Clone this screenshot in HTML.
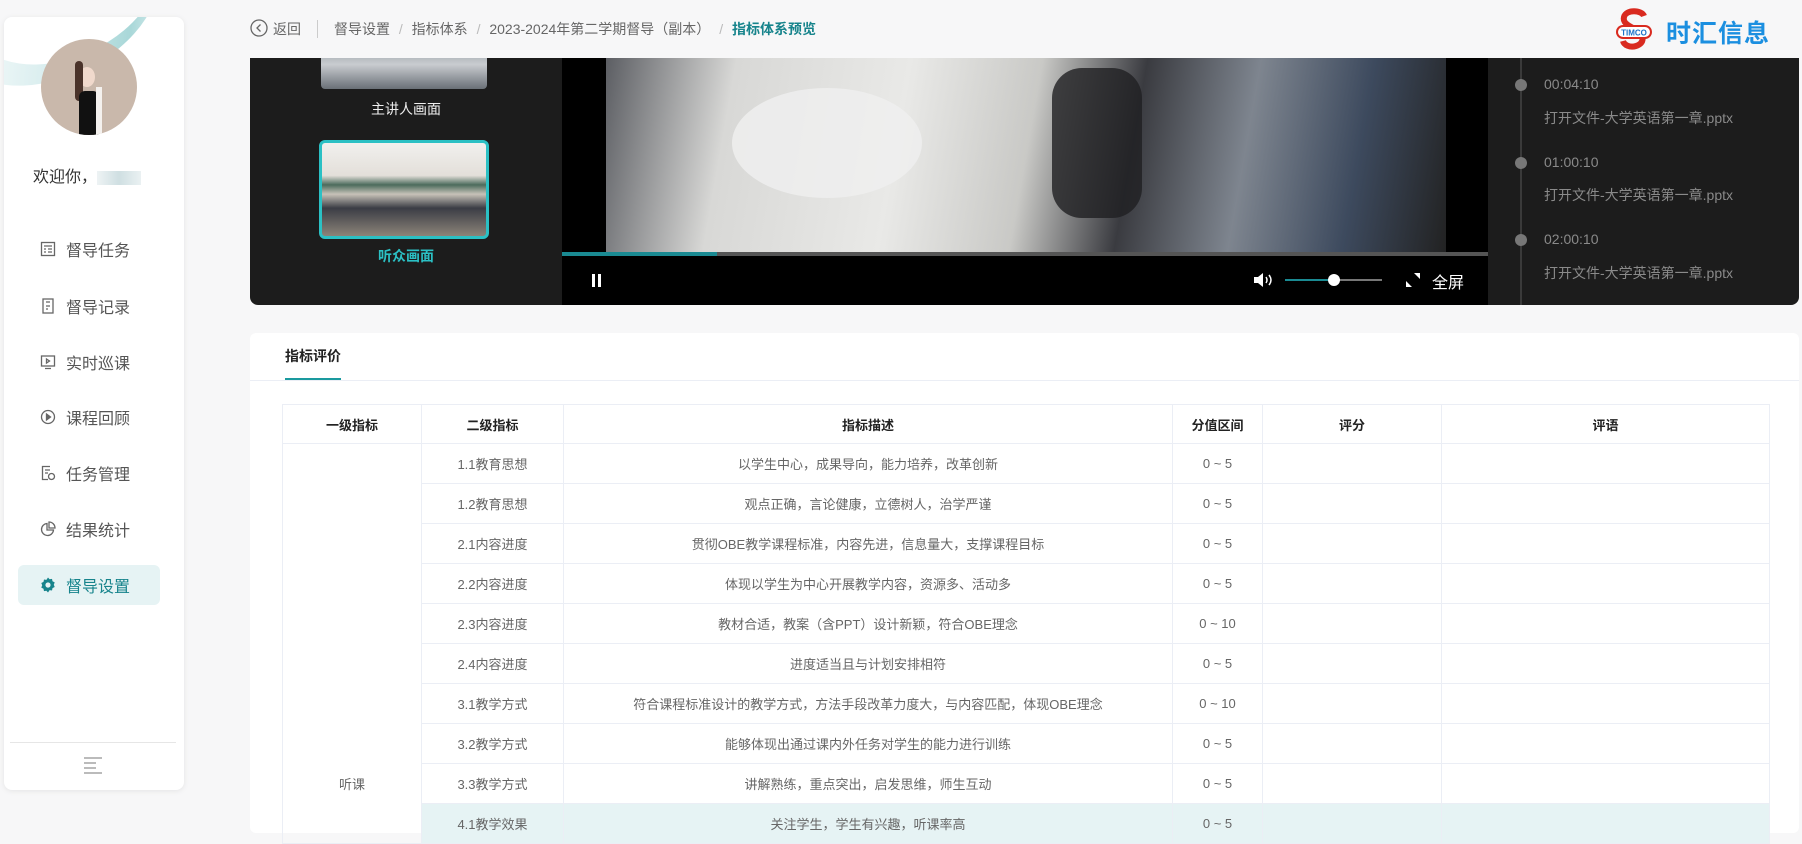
<!DOCTYPE html>
<html><head><meta charset="utf-8"><style>
*{margin:0;padding:0;box-sizing:border-box}
body{width:1802px;height:825px;overflow:hidden;background:#f7f7f8;font-family:"Liberation Sans","Noto Sans CJK SC",sans-serif;position:relative;color:#333}
.abs{position:absolute}
.side{left:4px;top:17px;width:180px;height:773px;background:#fff;border-radius:8px;box-shadow:0 1px 6px rgba(0,0,0,.08);overflow:hidden}
.menu{left:18px;width:142px;height:40px;font-size:16px;color:#555;display:flex;align-items:center;padding-left:22px}
.menu svg{margin-right:10px}
.bc{top:20px;font-size:14px;color:#666;line-height:18px}
.dark{left:250px;top:58px;width:1549px;height:247px;background:#1c1c1c;border-radius:0 0 8px 8px;overflow:hidden}
.tl{font-size:14px;color:#8a8a8a}
.card{left:250px;top:333px;width:1549px;height:500px;background:#fff;border-radius:6px}
table{position:absolute;left:282px;top:404px;border-collapse:collapse;font-size:13px;color:#666}
td,th{border:1px solid #ebeef5;text-align:center;height:40px;padding:0}
th{color:#222;font-weight:bold;height:39px;font-size:13px}
</style></head><body>
<div class="abs side">
 <div class="abs" style="left:-60px;top:-80px;width:220px;height:140px;border-radius:50%;background:linear-gradient(120deg,#ffffff 10%,#cfe9ea 55%,#9fd3d4 80%,#ffffff);transform:rotate(-25deg);opacity:.9"></div>
 <div class="abs" style="left:-40px;top:-90px;width:200px;height:130px;border-radius:50%;background:#fff;transform:rotate(-25deg)"></div>
 <div class="abs" style="left:37px;top:22px;width:96px;height:96px;border-radius:50%;background:#c9b8ab;overflow:hidden">
  <div class="abs" style="left:38px;top:28px;width:16px;height:20px;border-radius:50%;background:#f0d9cc"></div>
  <div class="abs" style="left:34px;top:22px;width:8px;height:40px;background:#4a332a;border-radius:5px"></div>
  <div class="abs" style="left:38px;top:52px;width:20px;height:60px;background:#111;border-radius:6px 6px 0 0"></div>
  <div class="abs" style="left:55px;top:48px;width:6px;height:50px;background:#f4f1ee"></div>
 </div>
 <div class="abs" style="left:29px;top:146px;font-size:16px;color:#333">欢迎你，<span style="display:inline-block;width:44px;height:14px;background:linear-gradient(90deg,#eef3f4,#cfdfe2,#eaf1f2);vertical-align:middle"></span></div>
 <div class="abs" style="left:6px;top:725px;width:166px;height:1px;background:#e6e6e6"></div>
 <div class="abs" style="left:80px;top:740px;width:18px;height:16px">
  <div style="height:2px;background:#bbb;margin-bottom:3px"></div><div style="height:2px;width:12px;background:#bbb;margin-bottom:3px"></div><div style="height:2px;width:12px;background:#bbb;margin-bottom:3px"></div><div style="height:2px;background:#bbb"></div>
 </div>
</div>
<div class="abs menu" style="top:229px"><svg width="16" height="16" viewBox="0 0 16 16" fill="none" stroke="#666" stroke-width="1.3"><rect x="1.5" y="1.5" width="13" height="13"/><path d="M4 5h8M4 8h2M8 8h4M4 11h2M8 11h4"/></svg>督导任务</div>
<div class="abs menu" style="top:286px"><svg width="16" height="16" viewBox="0 0 16 16" fill="none" stroke="#666" stroke-width="1.3"><rect x="3" y="1" width="10" height="14"/><path d="M6 4h4M6 8h4M6 11h2"/></svg>督导记录</div>
<div class="abs menu" style="top:342px"><svg width="16" height="16" viewBox="0 0 16 16" fill="none" stroke="#666" stroke-width="1.3"><rect x="1.5" y="2" width="13" height="10"/><path d="M6.5 5l3 2-3 2zM5 14.5h6"/></svg>实时巡课</div>
<div class="abs menu" style="top:397px"><svg width="16" height="16" viewBox="0 0 16 16" fill="none" stroke="#666" stroke-width="1.3"><circle cx="8" cy="8" r="6.5"/><path d="M6.5 5l4 3-4 3z" fill="#666"/></svg>课程回顾</div>
<div class="abs menu" style="top:453px"><svg width="16" height="16" viewBox="0 0 16 16" fill="none" stroke="#666" stroke-width="1.3"><path d="M10 1.5H2.5v13H8M5 5h5M5 8h3"/><circle cx="11.5" cy="11.5" r="3"/></svg>任务管理</div>
<div class="abs menu" style="top:509px"><svg width="16" height="16" viewBox="0 0 16 16" fill="none" stroke="#666" stroke-width="1.3"><path d="M7 2.5a6 6 0 1 0 6.5 6.5H7z"/><path d="M9 1v6h6a6 6 0 0 0-6-6z"/></svg>结果统计</div>
<div class="abs menu" style="top:565px;background:#e6f3f4;border-radius:6px;color:#17848c"><svg width="16" height="16" viewBox="0 0 16 16"><path d="M8 0.5l1.6 1.8 2.4-.4.5 2.4 2.2 1.1-.9 2.3.9 2.3-2.2 1.1-.5 2.4-2.4-.4L8 15.5l-1.6-1.8-2.4.4-.5-2.4-2.2-1.1.9-2.3-.9-2.3 2.2-1.1.5-2.4 2.4.4z" fill="#17848c"/><circle cx="8" cy="8" r="2.6" fill="#e6f3f4"/></svg>督导设置</div>

<svg class="abs" style="left:250px;top:19px" width="18" height="18" viewBox="0 0 18 18" fill="none" stroke="#666" stroke-width="1.3"><circle cx="9" cy="9" r="8"/><path d="M10.5 5.5L7 9l3.5 3.5"/></svg>
<div class="abs bc" style="left:273px">返回</div>
<div class="abs" style="left:317px;top:20px;width:1px;height:18px;background:#ccc"></div>
<div class="abs bc" style="left:334px">督导设置 <span style="color:#bbb;margin:0 5px">/</span> 指标体系 <span style="color:#bbb;margin:0 5px">/</span> 2023-2024年第二学期督导（副本） <span style="color:#bbb;margin:0 5px">/</span> <b style="color:#17848c">指标体系预览</b></div>

<svg class="abs" style="left:1614px;top:8px" width="40" height="46" viewBox="0 0 40 46"><path d="M30 8C28 2 12 1 10 9c-2 7 8 10 14 14s7 12-2 15c-6 2-12-1-13-5" fill="none" stroke="#d92a1f" stroke-width="6"/><rect x="2" y="17" width="36" height="14" rx="7" fill="#d92a1f"/><rect x="4" y="19" width="32" height="10" rx="5" fill="#fff"/><text x="20" y="27.5" font-size="8" font-weight="bold" fill="#1a73c9" text-anchor="middle" font-family="Liberation Sans,sans-serif">TIMCO</text></svg>
<div class="abs" style="left:1666px;top:14px;font-size:25px;font-weight:bold;color:#1b8fe0;letter-spacing:1px">时汇信息</div>

<div class="abs dark">
 <div class="abs" style="left:71px;top:-10px;width:166px;height:41px;border-radius:4px;background:linear-gradient(180deg,#9aa3a8,#c9ccd0 40%,#6a7077);"></div>
 <div class="abs" style="left:0;top:41px;width:312px;text-align:center;font-size:14px;color:#eee">主讲人画面</div>
 <div class="abs" style="left:69px;top:82px;width:170px;height:99px;border:3px solid #2bc0c4;border-radius:6px;background:linear-gradient(180deg,#f1f0ee 0%,#e3dfd9 35%,#4b6b5c 45%,#c7c2b8 55%,#3b3d45 70%,#8c8479 100%)"></div>
 <div class="abs" style="left:0;top:188px;width:312px;text-align:center;font-size:14px;font-weight:bold;color:#2bc0c4">听众画面</div>
 <div class="abs" style="left:312px;top:0;width:926px;height:247px;background:#000">
  <div class="abs" style="left:44px;top:0;width:840px;height:194px;background:linear-gradient(100deg,#5c5e63 0%,#d8d8d6 15%,#e9e9e7 35%,#c9c9c6 50%,#3a3b40 62%,#7e858f 75%,#3d4a5e 88%,#222 100%)"></div>
  <div class="abs" style="left:170px;top:30px;width:190px;height:110px;border-radius:50%;background:#efefef;opacity:.85"></div>
  <div class="abs" style="left:490px;top:10px;width:90px;height:150px;background:#1f1f22;border-radius:30px;opacity:.8"></div>
  <div class="abs" style="left:0;top:194px;width:926px;height:4px;background:#555"></div>
  <div class="abs" style="left:0;top:194px;width:155px;height:4px;background:#1a8a92"></div>
  <div class="abs" style="left:30px;top:216px;width:3px;height:13px;background:#fff"></div>
  <div class="abs" style="left:36px;top:216px;width:3px;height:13px;background:#fff"></div>
  <svg class="abs" style="left:690px;top:213px" width="24" height="18" viewBox="0 0 24 18"><path d="M2 6h4l5-4v14l-5-4H2z" fill="#fff"/><path d="M14 6q2 3 0 6M17 4q4 5 0 10" stroke="#fff" stroke-width="1.5" fill="none"/></svg>
  <div class="abs" style="left:723px;top:221px;width:97px;height:2px;background:#777"></div>
  <div class="abs" style="left:723px;top:221px;width:49px;height:2px;background:#1a8a92"></div>
  <div class="abs" style="left:766px;top:216px;width:12px;height:12px;border-radius:50%;background:#fff"></div>
  <svg class="abs" style="left:842px;top:213px" width="18" height="18" viewBox="0 0 18 18" fill="#fff"><path d="M2 16V10l6 6zM16 2v6l-6-6z"/></svg>
  <div class="abs" style="left:870px;top:211px;font-size:16px;color:#fff">全屏</div>
 </div>
 <div class="abs" style="left:1270px;top:0;width:2px;height:247px;background:#3a3a3a"></div>
 <div class="abs" style="left:1265px;top:21px;width:12px;height:12px;border-radius:50%;background:#777"></div>
 <div class="abs" style="left:1265px;top:99px;width:12px;height:12px;border-radius:50%;background:#777"></div>
 <div class="abs" style="left:1265px;top:176px;width:12px;height:12px;border-radius:50%;background:#777"></div>
 <div class="abs tl" style="left:1294px;top:18px">00:04:10</div>
 <div class="abs tl" style="left:1294px;top:50px">打开文件-大学英语第一章.pptx</div>
 <div class="abs tl" style="left:1294px;top:96px">01:00:10</div>
 <div class="abs tl" style="left:1294px;top:127px">打开文件-大学英语第一章.pptx</div>
 <div class="abs tl" style="left:1294px;top:173px">02:00:10</div>
 <div class="abs tl" style="left:1294px;top:205px">打开文件-大学英语第一章.pptx</div>
</div>

<div class="abs card">
 <div class="abs" style="left:35px;top:13px;font-size:14px;font-weight:bold;color:#222">指标评价</div>
 <div class="abs" style="left:35px;top:45px;width:56px;height:3px;background:#1a9a9f"></div>
 <div class="abs" style="left:0;top:47px;width:1549px;height:1px;background:#ebeef5"></div>
</div>
<table>
<tr><th style="width:139px">一级指标</th><th style="width:142px">二级指标</th><th style="width:609px">指标描述</th><th style="width:90px">分值区间</th><th style="width:179px">评分</th><th style="width:328px">评语</th></tr>
<tr><td rowspan="10" style="vertical-align:bottom;padding-bottom:50px">听课</td><td>1.1教育思想</td><td>以学生中心，成果导向，能力培养，改革创新</td><td>0 ~ 5</td><td></td><td></td></tr>
<tr><td>1.2教育思想</td><td>观点正确，言论健康，立德树人，治学严谨</td><td>0 ~ 5</td><td></td><td></td></tr>
<tr><td>2.1内容进度</td><td>贯彻OBE教学课程标准，内容先进，信息量大，支撑课程目标</td><td>0 ~ 5</td><td></td><td></td></tr>
<tr><td>2.2内容进度</td><td>体现以学生为中心开展教学内容，资源多、活动多</td><td>0 ~ 5</td><td></td><td></td></tr>
<tr><td>2.3内容进度</td><td>教材合适，教案（含PPT）设计新颖，符合OBE理念</td><td>0 ~ 10</td><td></td><td></td></tr>
<tr><td>2.4内容进度</td><td>进度适当且与计划安排相符</td><td>0 ~ 5</td><td></td><td></td></tr>
<tr><td>3.1教学方式</td><td>符合课程标准设计的教学方式，方法手段改革力度大，与内容匹配，体现OBE理念</td><td>0 ~ 10</td><td></td><td></td></tr>
<tr><td>3.2教学方式</td><td>能够体现出通过课内外任务对学生的能力进行训练</td><td>0 ~ 5</td><td></td><td></td></tr>
<tr><td>3.3教学方式</td><td>讲解熟练，重点突出，启发思维，师生互动</td><td>0 ~ 5</td><td></td><td></td></tr>
<tr style="background:#e6f3f4"><td>4.1教学效果</td><td>关注学生，学生有兴趣，听课率高</td><td>0 ~ 5</td><td></td><td></td></tr>
</table>
</body></html>
